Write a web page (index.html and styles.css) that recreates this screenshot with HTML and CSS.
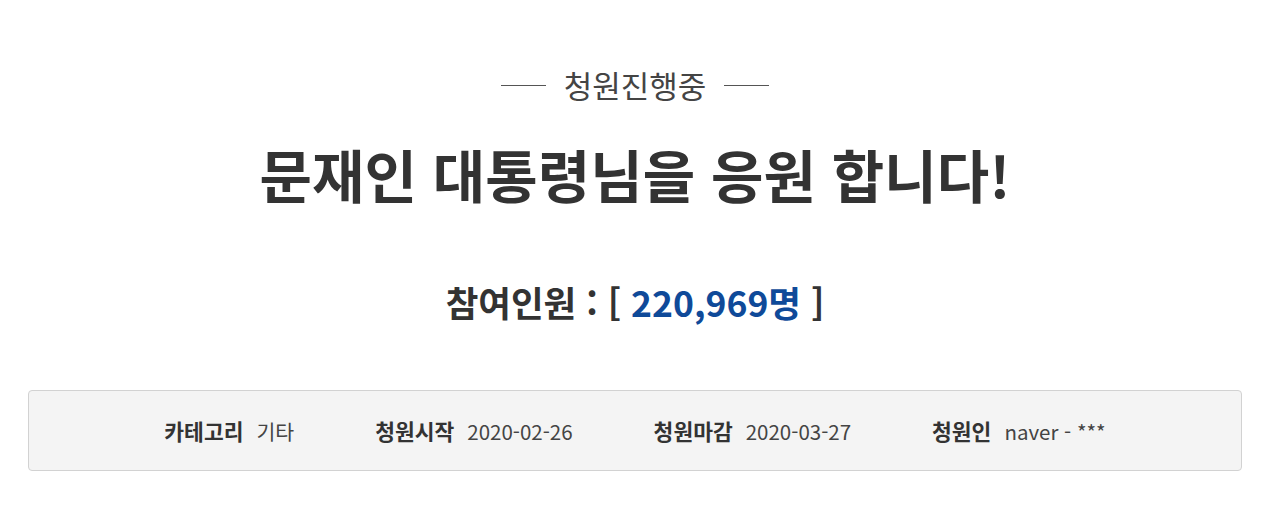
FILE: index.html
```html
<!DOCTYPE html>
<html lang="ko">
<head>
<meta charset="utf-8">
<link rel="stylesheet" href="styles.css">
</head>
<body>
<div class="page">
  <div class="status"><span class="status-text">청원진행중</span></div>
  <h1 class="title">문재인 대통령님을 응원 합니다!</h1>
  <div class="count">참여인원 : [ <span class="num">220,969명</span> ]</div>
  <div class="info">
    <div class="item"><span class="label">카테고리</span><span class="value">기타</span></div>
    <div class="item"><span class="label">청원시작</span><span class="value">2020-02-26</span></div>
    <div class="item"><span class="label">청원마감</span><span class="value">2020-03-27</span></div>
    <div class="item"><span class="label">청원인</span><span class="value">naver - ***</span></div>
  </div>
</div>
</body>
</html>
```

FILE: styles.css
```css
html, body {
  margin: 0;
  padding: 0;
  background: #fff;
}
body {
  font-family: "Noto Sans CJK KR", "Noto Sans", sans-serif;
  color: #333;
}
.page {
  padding: 65px 28px 0 28px;
  width: 1214px;
}
.status {
  display: flex;
  justify-content: center;
  align-items: center;
  gap: 18px;
  height: 40px;
}
.status::before,
.status::after {
  content: "";
  display: block;
  width: 45px;
  height: 1px;
  background: #555;
}
.status-text {
  font-size: 31px;
  line-height: 40px;
  color: #444;
}
.title {
  margin: 36px 0 0 0;
  text-align: center;
  font-size: 57px;
  line-height: 64px;
  font-weight: 700;
  color: #333;
}
.count {
  margin-top: 75px;
  text-align: center;
  font-size: 35.5px;
  line-height: 44px;
  font-weight: 700;
  color: #333;
}
.count .num {
  color: #0f4a99;
}
.info {
  margin-top: 66px;
  height: 79px;
  background: #f4f4f4;
  border: 1px solid #d2d2d2;
  border-radius: 4px;
  display: flex;
  justify-content: center;
  align-items: center;
  gap: 81px;
}
.item {
  display: flex;
  align-items: center;
  gap: 13px;
}
.label {
  font-size: 21.5px;
  font-weight: 700;
  color: #333;
}
.value {
  font-size: 20.5px;
  color: #444;
}
```
